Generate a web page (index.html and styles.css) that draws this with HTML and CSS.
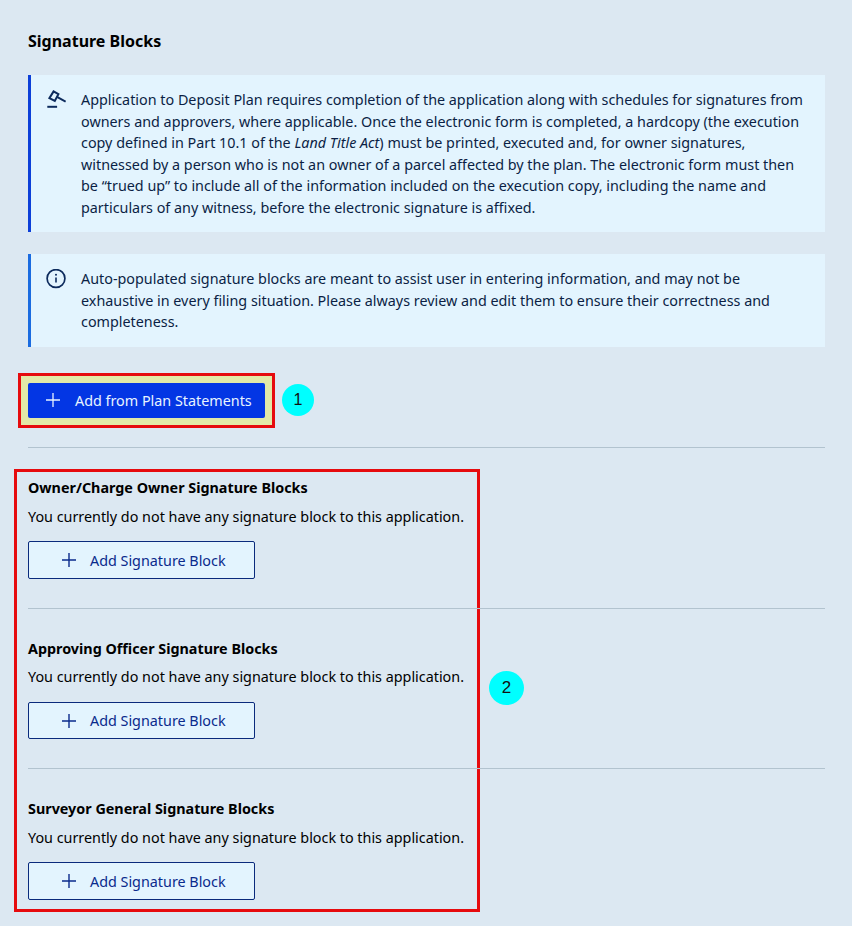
FILE: index.html
```html
<!DOCTYPE html>
<html lang="en">
<head>
<meta charset="utf-8">
<title>Signature Blocks</title>
<link rel="stylesheet" href="styles.css">
</head>
<body>
<main class="page">
  <h1 class="title">Signature Blocks</h1>

  <div class="notice notice-legal">
    <svg class="notice-icon" viewBox="0 0 20 20" width="20" height="20" aria-hidden="true">
      <path d="M7.6 1.4 3.4 8.2 8.8 11 12.4 4.2z" fill="none" stroke="#0c2a5c" stroke-width="2" stroke-linejoin="miter"/>
      <path d="M11 6.8 19.6 11.6" fill="none" stroke="#0c2a5c" stroke-width="1.9"/>
      <path d="M1.3 16.8h9.8" fill="none" stroke="#0c2a5c" stroke-width="2"/>
    </svg>
    <p class="notice-text">Application to Deposit Plan requires completion of the application along with schedules for signatures from owners and approvers, where applicable. Once the electronic form is completed, a hardcopy (the execution copy defined in Part 10.1 of the <em>Land Title Act</em>) must be printed, executed and, for owner signatures, witnessed by a person who is not an owner of a parcel affected by the plan. The electronic form must then be “trued up” to include all of the information included on the execution copy, including the name and particulars of any witness, before the electronic signature is affixed.</p>
  </div>

  <div class="notice notice-info">
    <svg class="notice-icon" viewBox="0 0 20 20" width="20" height="20" aria-hidden="true">
      <circle cx="10" cy="9.5" r="8.9" fill="none" stroke="#0c2a5c" stroke-width="1.7"/>
      <path d="M10 8.5v5" fill="none" stroke="#0c2a5c" stroke-width="1.6"/>
      <circle cx="10" cy="5.8" r="1" fill="#0c2a5c"/>
    </svg>
    <p class="notice-text">Auto-populated signature blocks are meant to assist user in entering information, and may not be exhaustive in every filing situation. Please always review and edit them to ensure their correctness and completeness.</p>
  </div>

  <div class="primary-row">
    <button class="btn btn-primary" type="button">
      <svg class="plus" viewBox="0 0 14 14" width="14" height="14" aria-hidden="true"><path d="M7 0v14M0 7h14" fill="none" stroke="currentColor" stroke-width="1.3"/></svg>
      <span>Add from Plan Statements</span>
    </button>
    <div class="mark mark-one"></div>
    <div class="badge badge-one">1</div>
  </div>

  <div class="sections">
    <div class="mark mark-two"></div>
    <div class="badge badge-two">2</div>

    <section class="block">
      <h2 class="block-title">Owner/Charge Owner Signature Blocks</h2>
      <p class="block-text">You currently do not have any signature block to this application.</p>
      <button class="btn btn-outline" type="button">
        <svg class="plus" viewBox="0 0 14 14" width="14" height="14" aria-hidden="true"><path d="M7 0v14M0 7h14" fill="none" stroke="currentColor" stroke-width="1.4"/></svg>
        <span>Add Signature Block</span>
      </button>
    </section>

    <section class="block">
      <h2 class="block-title">Approving Officer Signature Blocks</h2>
      <p class="block-text">You currently do not have any signature block to this application.</p>
      <button class="btn btn-outline" type="button">
        <svg class="plus" viewBox="0 0 14 14" width="14" height="14" aria-hidden="true"><path d="M7 0v14M0 7h14" fill="none" stroke="currentColor" stroke-width="1.4"/></svg>
        <span>Add Signature Block</span>
      </button>
    </section>

    <section class="block block-last">
      <h2 class="block-title">Surveyor General Signature Blocks</h2>
      <p class="block-text">You currently do not have any signature block to this application.</p>
      <button class="btn btn-outline" type="button">
        <svg class="plus" viewBox="0 0 14 14" width="14" height="14" aria-hidden="true"><path d="M7 0v14M0 7h14" fill="none" stroke="currentColor" stroke-width="1.4"/></svg>
        <span>Add Signature Block</span>
      </button>
    </section>
  </div>
</main>
</body>
</html>
```

FILE: styles.css
```css
* { box-sizing: border-box; }
html, body { margin: 0; padding: 0; }
body {
  background: #dce8f2;
  color: #000;
  font-family: "Noto Sans", sans-serif;
  font-size: 14.35px;
  width: 852px;
  height: 926px;
  overflow: hidden;
}
.page { padding: 30px 27px 0 28px; }
.title {
  margin: 0 0 23px;
  font-size: 16px;
  line-height: 22px;
  font-weight: 700;
}
.notice {
  display: flex;
  gap: 15px;
  padding: 14px 14px 13.4px 15px;
  background: #e3f4fe;
  border-left: 3px solid #0c3fd8;
  margin-bottom: 22px;
}
.notice-info {
  padding-bottom: 14.2px;
  border-left-color: #1a6be0;
  margin-bottom: 36px;
}
.notice-icon { flex: none; width: 20px; height: 20px; margin-top: 1px; }
.notice-text {
  margin: 0;
  font-size: 14.35px;
  line-height: 21.6px;
  color: #0b1f45;
}
.btn {
  display: flex;
  align-items: center;
  font-family: inherit;
  font-size: 14.35px;
  border-radius: 2px;
  cursor: pointer;
}
.plus { flex: none; }
.primary-row { position: relative; height: 35px; margin-bottom: 29px; }
.btn-primary {
  position: relative;
  z-index: 1;
  width: 237px;
  height: 35px;
  gap: 15px;
  padding: 0 0 0 18px;
  background: #0336e4;
  color: #e8f4ff;
  border: 0;
}
.mark { position: absolute; border: 3px solid #e60b0e; }
.mark-one {
  left: -10px;
  top: -10px;
  width: 257px;
  height: 55px;
  background: #e3e9a8;
}
.badge {
  position: absolute;
  display: flex;
  align-items: center;
  justify-content: center;
  background: #00ffff;
  border-radius: 50%;
  color: #111;
  font-family: "Liberation Sans", sans-serif;
  font-size: 16px;
}
.badge-one { left: 254px; top: 1px; width: 32px; height: 32px; }
.badge-two { left: 461px; top: 223px; width: 35px; height: 34px; font-size: 17px; }
.sections {
  position: relative;
  border-top: 1px solid #b2c3cf;
}
.mark-two {
  left: -14px;
  top: 21px;
  width: 466px;
  height: 443px;
}
.block {
  position: relative;
  height: 160.6px;
  padding-top: 29px;
  border-bottom: 1px solid #b2c3cf;
}
.block-last { border-bottom: 0; }
.block-title {
  margin: 0 0 7.7px;
  font-size: 14.35px;
  line-height: 21px;
  font-weight: 700;
}
.block-text {
  margin: 0 0 14.7px;
  font-size: 14.35px;
  line-height: 21px;
}
.btn-outline {
  width: 227px;
  height: 37.6px;
  gap: 14px;
  padding: 0 0 0 33px;
  background: #e3f4fe;
  color: #0a2a8c;
  border: 1px solid #0a2a7c;
}
```
